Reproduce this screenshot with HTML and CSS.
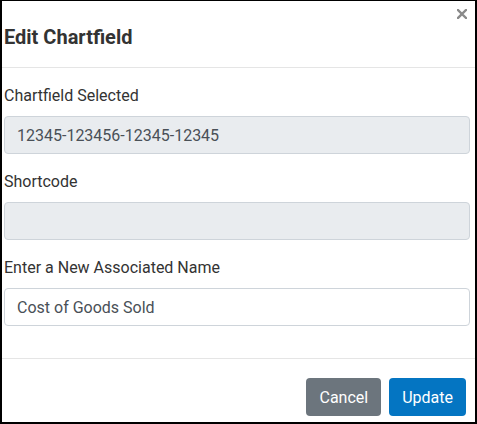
FILE: index.html
```html
<!DOCTYPE html>
<html lang="en">
<head>
<meta charset="utf-8">
<title>Edit Chartfield</title>
<link rel="stylesheet" href="styles.css">
</head>
<body>
<div class="modal">
  <div class="modal-header">
    <h4 class="modal-title">Edit Chartfield</h4>
    <button class="close" type="button" aria-label="Close">
      <svg width="10" height="10" viewBox="0 0 10 10" aria-hidden="true">
        <path d="M1 1 L9 9 M9 1 L1 9" stroke="#8a8a8a" stroke-width="2.4" stroke-linecap="square" fill="none"/>
      </svg>
    </button>
  </div>
  <div class="modal-body">
    <div class="form-group">
      <label class="form-label">Chartfield Selected</label>
      <input class="form-control" type="text" value="12345-123456-12345-12345" disabled>
    </div>
    <div class="form-group">
      <label class="form-label">Shortcode</label>
      <input class="form-control" type="text" value="" disabled>
    </div>
    <div class="form-group">
      <label class="form-label">Enter a New Associated Name</label>
      <input class="form-control" type="text" value="Cost of Goods Sold">
    </div>
  </div>
  <div class="modal-footer">
    <button class="btn btn-secondary" type="button">Cancel</button>
    <button class="btn btn-primary" type="button">Update</button>
  </div>
</div>
</body>
</html>
```

FILE: styles.css
```css
* { box-sizing: border-box; }

html, body {
  margin: 0;
  padding: 0;
  background: #ffffff;
}

body {
  font-family: Roboto, "Liberation Sans", Arial, sans-serif;
  color: #333333;
}

.modal {
  width: 477px;
  height: 424px;
  border-style: solid;
  border-color: #000000;
  border-width: 1px 2px 2px 2px;
  background: #ffffff;
  display: flex;
  flex-direction: column;
}

.modal-header {
  display: flex;
  justify-content: space-between;
  align-items: flex-start;
  padding: 0 8px 0 2px;
  border-bottom: 1px solid #e5e5e5;
}

.modal-title {
  margin: 21px 0 15px 0;
  font-size: 20px;
  line-height: 30px;
  font-weight: 700;
  color: #333333;
}

.close {
  margin-top: 8px;
  padding: 0;
  border: 0;
  background: transparent;
  width: 10px;
  height: 10px;
  display: flex;
  cursor: pointer;
}

.modal-body {
  padding: 16px 5px 16px 2px;
}

.form-group {
  display: flex;
  flex-direction: column;
  margin-bottom: 16px;
}

.form-label {
  font-size: 16px;
  line-height: 24px;
  margin-bottom: 8px;
  color: #333333;
}

.form-control {
  width: 466px;
  height: 38px;
  padding: 0 12px;
  font-family: Roboto, "Liberation Sans", Arial, sans-serif;
  font-size: 16px;
  color: #495057;
  background: #ffffff;
  border: 1px solid #ced4da;
  border-radius: 4px;
  outline: none;
}

.form-control:disabled {
  background: #e9ecef;
  color: #495057;
  -webkit-text-fill-color: #495057;
  opacity: 1;
}

.modal-footer {
  display: flex;
  justify-content: flex-end;
  gap: 8px;
  padding: 19px 9px 6px 0;
  border-top: 1px solid #e5e5e5;
}

.btn {
  height: 38px;
  padding: 0 13px;
  font-family: Roboto, "Liberation Sans", Arial, sans-serif;
  font-size: 16px;
  color: #ffffff;
  border: 0;
  border-radius: 4px;
  cursor: pointer;
}

.btn-secondary { background: #6c757d; }
.btn-primary { background: #0475c2; }
```
